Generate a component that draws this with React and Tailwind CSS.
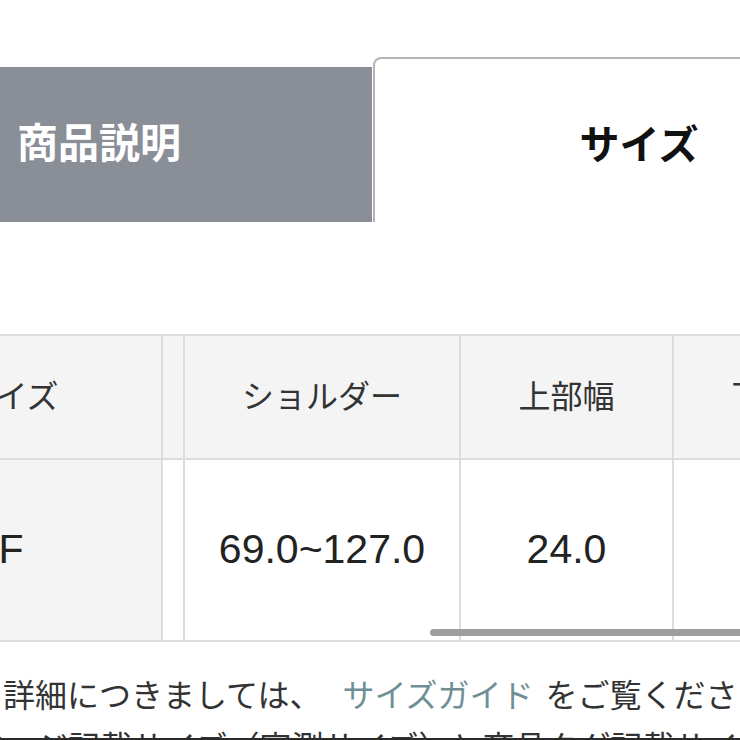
import React from "react";

const font = "font-['Liberation_Sans','Noto_Sans_CJK_JP',sans-serif]";

const App = () => {
  return (
    <div
      className={`relative h-[740px] w-[740px] overflow-hidden bg-white text-[#333] ${font}`}
    >
      {/* Tabs */}
      <div className="-ml-[174px] flex items-end pt-[57px]">
        <div className="flex h-[155px] w-[546px] shrink-0 items-center justify-center bg-[#8a8e97] text-[41px] font-bold text-white">
          商品説明
        </div>
        <div className="ml-[1px] flex h-[165px] w-[532px] shrink-0 items-center justify-center rounded-t-[8px] border-2 border-b-0 border-[#b4b4b4] pt-[8px] text-[40px] font-bold text-[#111]">
          サイズ
        </div>
      </div>

      {/* Size table */}
      <div className="relative mt-[112px]">
        <div className="-ml-[139px] w-[1100px] border-y-2 border-[#dcdcdc]">
          <div className="flex h-[124px] border-b-2 border-[#dcdcdc] bg-[#f4f4f4] text-[32px]">
            <div className="flex w-[302px] shrink-0 items-center justify-center border-r-2 border-[#dcdcdc]">
              サイズ
            </div>
            <div className="w-[22px] shrink-0 border-r-2 border-[#dcdcdc]"></div>
            <div className="flex w-[276px] shrink-0 items-center justify-center border-r-2 border-[#dcdcdc]">
              ショルダー
            </div>
            <div className="flex w-[213px] shrink-0 items-center justify-center border-r-2 border-[#dcdcdc]">
              上部幅
            </div>
            <div className="flex w-[213px] shrink-0 items-center justify-center border-r-2 border-[#dcdcdc]">
              下部幅
            </div>
          </div>
          <div className="flex h-[180px] text-[41px] text-[#222]">
            <div className="flex w-[302px] shrink-0 items-center justify-center border-r-2 border-[#dcdcdc] bg-[#f4f4f4]">
              F
            </div>
            <div className="w-[22px] shrink-0 border-r-2 border-[#dcdcdc]"></div>
            <div className="flex w-[276px] shrink-0 items-center justify-center border-r-2 border-[#dcdcdc]">
              69.0~127.0
            </div>
            <div className="flex w-[213px] shrink-0 items-center justify-center border-r-2 border-[#dcdcdc]">
              24.0
            </div>
            <div className="flex w-[213px] shrink-0 items-center justify-center border-r-2 border-[#dcdcdc]">
              36.0
            </div>
          </div>
        </div>
        {/* scrollbar thumb */}
        <div className="absolute left-[430px] top-[295px] h-[7px] w-[340px] rounded-full bg-[#9e9e9e]"></div>
      </div>

      {/* Notes */}
      <div className="mt-[30px] whitespace-nowrap text-[32px] leading-[48px] text-[#333]">
        <div className="pl-[3px]">
          詳細につきましては、
          <span className="ml-[21px] mr-[12px] text-[#6f8f95]">サイズガイド</span>
          をご覧ください。
        </div>
        <div className="-ml-[27px] mt-[4px]">
          ページ記載サイズ（実測サイズ）と商品タグ記載サイズが異なる場合がございます。
        </div>
      </div>

      <div className="absolute inset-x-0 bottom-0 h-[2px] bg-[#2a2a2a]"></div>
    </div>
  );
};

export default App;
